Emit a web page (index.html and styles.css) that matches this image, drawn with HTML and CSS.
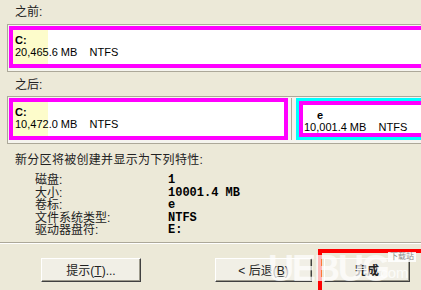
FILE: index.html
```html
<!DOCTYPE html>
<html lang="zh-CN">
<head>
    <meta charset="UTF-8">
    <title>新建磁盘分区向导</title>
    <link rel="stylesheet" href="styles.css">
</head>
<body>
    <div class="page">
        <div class="caption">之前:</div>
        <div class="map">
            <div class="part part-used">
                <b>C:</b>
                <span>20,465.6 MB&nbsp;&nbsp;&nbsp; NTFS</span>
            </div>
        </div>

        <div class="caption caption-after">之后:</div>
        <div class="map map-split">
            <div class="part part-used part-left">
                <b>C:</b>
                <span>10,472.0 MB&nbsp;&nbsp;&nbsp; NTFS</span>
            </div>
            <div class="slot">
                <div class="selected">
                    <div class="part part-new">
                        <b class="vol">e</b>
                        <span>10,001.4 MB&nbsp;&nbsp;&nbsp; NTFS</span>
                    </div>
                </div>
            </div>
        </div>

        <p class="summary">新分区将被创建并显示为下列特性:</p>
        <dl class="props">
            <dt>磁盘:</dt><dd>1</dd>
            <dt>大小:</dt><dd>10001.4 MB</dd>
            <dt>卷标:</dt><dd>e</dd>
            <dt>文件系统类型:</dt><dd>NTFS</dd>
            <dt>驱动器盘符:</dt><dd>E:</dd>
        </dl>

        <div class="footer">
            <button class="btn btn-hint">提示(<u>T</u>)...</button>
            <button class="btn btn-back">&lt; 后退(<u>B</u>)</button>
            <div class="highlight">
                <button class="btn btn-finish">完成</button>
            </div>
        </div>

        <!-- site watermark over the buttons -->
        <div class="watermark">
            <span class="wm-logo">UEBUG</span>
            <span class="wm-com">.com</span>
            <span class="wm-tag">下载站</span>
        </div>
    </div>
</body>
</html>
```

FILE: styles.css
```css
body {
    margin: 0;
    background-color: #ece9d8;
    font-family: "Liberation Sans", "Noto Sans CJK SC", sans-serif;
    font-size: 11px;
    color: #000;
    overflow: hidden;
}
.page {
    position: relative;
    width: 421px;
    height: 290px;
    overflow: hidden;
}
.caption {
    height: 24px;
    line-height: 24px;
    padding-left: 15px;
    font-size: 12px;
    color: #222;
}
.caption-after {
    height: 22px;
    line-height: 22px;
    padding-top: 2px;
}
.map {
    margin-left: 7px;
    margin-right: -20px;
    padding: 1px 0 3px 1px;
    border: 1px solid #aca899;
    border-right: none;
    background-color: #f5f4ee;
}
.map-split {
    display: flex;
}
.part {
    border: 4px solid #ff00ff;
    background-color: #fff;
    padding: 4px 0 0 2px;
    line-height: 12px;
    display: flex;
    flex-direction: column;
    white-space: nowrap;
}
.part-used {
    height: 30px;
    background: linear-gradient(to right, #fdfccb 35px, #fff 35px);
}
.part-left {
    flex: 0 0 269px;
}
.slot {
    flex: 1;
    display: flex;
    margin-left: 3px;
    padding-left: 4px;
    border-left: 1px solid #aca899;
}
.selected {
    flex: 1;
    display: flex;
    border: 3px solid #00ffff;
}
.part-new {
    flex: 1;
    padding-left: 1px;
}
.vol {
    padding-left: 13px;
}
.summary {
    margin: 9px 0 0 15px;
    line-height: 14px;
    font-size: 12px;
    letter-spacing: 0.3px;
    color: #222;
}
.props {
    display: grid;
    grid-template-columns: 133px auto;
    grid-auto-rows: 12.5px;
    align-items: center;
    margin: 7px 0 0 35px;
}
.props dt {
    font-size: 12px;
    line-height: 12px;
    color: #222;
}
.props dd {
    margin: 0;
    font-family: "Liberation Mono", monospace;
    font-weight: bold;
    font-size: 12px;
    line-height: 12px;
}
.footer {
    display: flex;
    align-items: flex-start;
    margin-top: 5px;
    padding: 5px 0 0 41px;
    border-top: 1px solid #aca899;
    box-shadow: inset 0 1px 0 #fff;
}
.btn {
    height: 24px;
    margin-top: 10px;
    padding: 0;
    font-family: "Liberation Sans", "Noto Sans CJK SC", sans-serif;
    font-size: 12px;
    color: #222;
    background-color: #f1efe6;
    border: 1px solid;
    border-color: #fff #404040 #404040 #fff;
    box-shadow: inset -1px -1px 0 #9d9a8c;
}
.btn-hint {
    width: 103px;
}
.btn-back {
    width: 100px;
    margin-left: 74px;
}
.highlight {
    width: 100px;
    margin-left: 6px;
    margin-top: 1px;
    padding: 5px 0 10px 2px;
    border: 4px solid #ff0000;
    border-right: none;
}
.btn-finish {
    width: 86px;
    margin-top: 0;
    font-weight: bold;
}
.watermark {
    position: absolute;
    left: 268px;
    top: 246px;
    width: 153px;
    height: 44px;
    pointer-events: none;
}
.wm-logo {
    position: absolute;
    left: 0;
    top: 2px;
    font-size: 36px;
    font-weight: bold;
    letter-spacing: -2px;
    color: rgba(255, 255, 255, 0.72);
}
.wm-com {
    position: absolute;
    left: 108px;
    top: 18px;
    font-size: 15px;
    color: rgba(255, 255, 255, 0.8);
}
.wm-tag {
    position: absolute;
    left: 120px;
    top: 6px;
    padding: 0 2px;
    font-size: 8px;
    line-height: 10px;
    color: #888;
    background-color: rgba(255, 255, 255, 0.85);
}
```
